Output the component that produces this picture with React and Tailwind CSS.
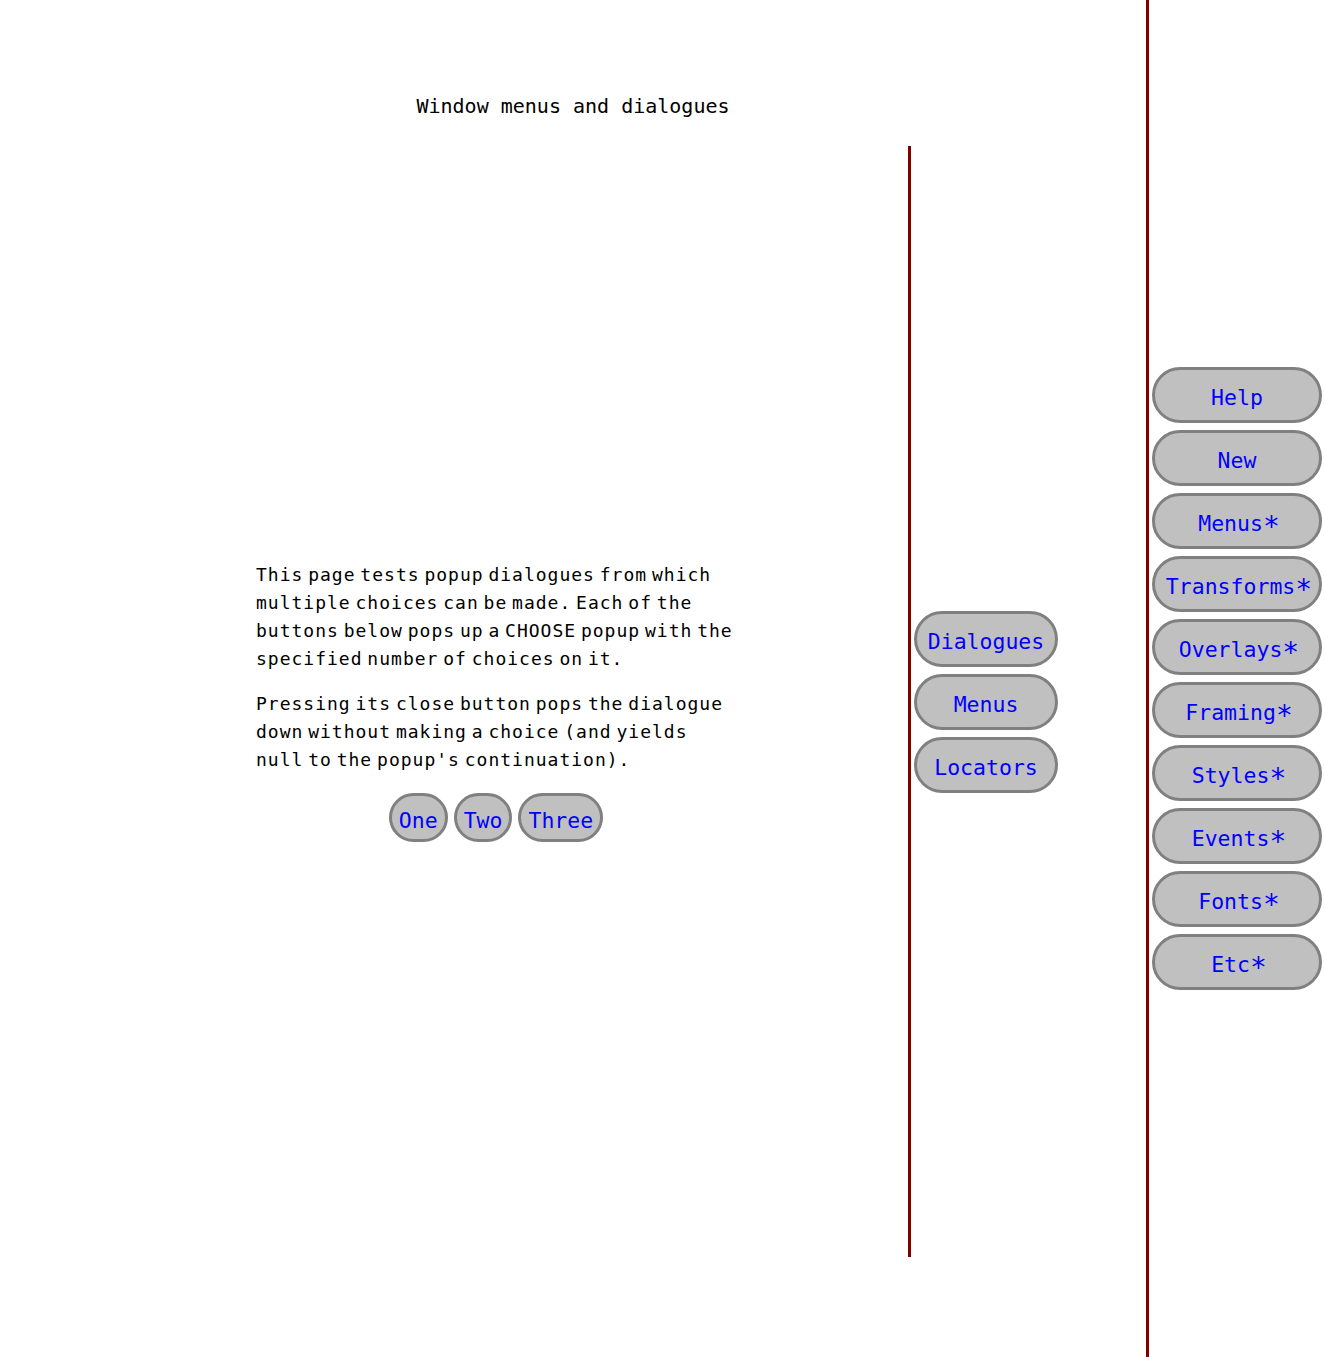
const mono = { fontFamily: '"DejaVu Sans Mono", "Liberation Mono", monospace' }

const paragraphs = [
    [
        "This page tests popup dialogues from which",
        "multiple choices can be made. Each of the",
        "buttons below pops up a CHOOSE popup with the",
        "specified number of choices on it.",
    ],
    [
        "Pressing its close button pops the dialogue",
        "down without making a choice (and yields",
        "null to the popup's continuation).",
    ],
]

const choices = ["One", "Two", "Three"]
const pageButtons = ["Dialogues", "Menus", "Locators"]
const navButtons = ["Help", "New", "Menus*", "Transforms*", "Overlays*", "Framing*", "Styles*", "Events*", "Fonts*", "Etc*"]

// the asterisk is bigger and sits on the x-height in the original
const Label = ({ text }) => {
    if (!text.endsWith("*")) return text
    return (
        <>
            {text.slice(0, -1)}
            <span className="relative top-[5px] text-[28px] leading-[0] tracking-[-4px]">*</span>
        </>
    )
}

const PillButton = ({ label, className }) => (
    <button
        className={`flex items-center justify-center rounded-full border-[3px] border-[#808080] bg-[#c0c0c0] pt-[6px] text-[21.5px] leading-none text-[#0000ff] ${className}`}
        style={mono}
    >
        <span className="leading-none">
            <Label text={label} />
        </span>
    </button>
)

const App = () => {
    return (
        <div className="flex h-[1357px] w-[1325px] overflow-hidden bg-white" style={mono}>
            <div className="flex w-[1146px] flex-col">
                {/* title */}
                <div className="h-[146px] pt-[94px] text-center text-[20px] leading-[24px] text-black">
                    Window menus and dialogues
                </div>

                <div className="flex h-[1111px]">
                    {/* page content */}
                    <div className="flex w-[908px] items-center justify-center pl-[84px]">
                        <div className="flex w-[480px] flex-col">
                            {paragraphs.map((lines, i) => (
                                <p
                                    key={i}
                                    className={`${i > 0 ? "mt-[17px]" : ""} text-[18px] leading-[28px] tracking-[1px] text-black`}
                                    style={{ wordSpacing: "-7px" }}
                                >
                                    {lines.map((line) => (
                                        <span key={line} className="block whitespace-nowrap">{line}</span>
                                    ))}
                                </p>
                            ))}
                            <div className="mt-[19px] flex justify-center gap-[6px]">
                                {choices.map((c) => (
                                    <PillButton key={c} label={c} className="h-[49px] px-[7px]" />
                                ))}
                            </div>
                        </div>
                    </div>

                    {/* page buttons */}
                    <div className="flex flex-1 flex-col justify-center gap-[7px] border-l-[3px] border-[#800000] pl-[3px]">
                        {pageButtons.map((b) => (
                            <PillButton key={b} label={b} className="h-[56px] w-[144px]" />
                        ))}
                    </div>
                </div>
            </div>

            {/* navigation */}
            <div className="flex flex-1 flex-col justify-center gap-[7px] border-l-[3px] border-[#800000] pl-[3px] pr-[3px]">
                {navButtons.map((b) => (
                    <PillButton key={b} label={b} className="h-[56px] w-full" />
                ))}
            </div>
        </div>
    )
}

export default App
